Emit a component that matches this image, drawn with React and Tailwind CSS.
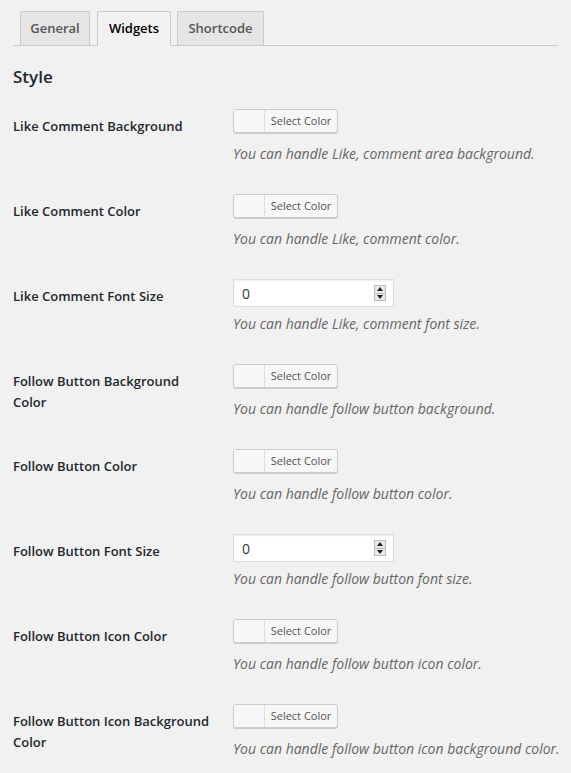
import React from 'react';

const rows = [
  { label: 'Like Comment Background', type: 'color', desc: 'You can handle Like, comment area background.' },
  { label: 'Like Comment Color', type: 'color', desc: 'You can handle Like, comment color.' },
  { label: 'Like Comment Font Size', type: 'number', desc: 'You can handle Like, comment font size.' },
  { label: 'Follow Button Background Color', type: 'color', desc: 'You can handle follow button background.' },
  { label: 'Follow Button Color', type: 'color', desc: 'You can handle follow button color.' },
  { label: 'Follow Button Font Size', type: 'number', desc: 'You can handle follow button font size.' },
  { label: 'Follow Button Icon Color', type: 'color', desc: 'You can handle follow button icon color.' },
  { label: 'Follow Button Icon Background Color', type: 'color', desc: 'You can handle follow button icon background color.' },
];

const ColorButton = () => (
  <button
    type="button"
    className="flex h-[24px] w-[105px] overflow-hidden rounded-[3px] border border-[#ccc] bg-[#f7f7f7] shadow-[0_1px_0_#ccc]"
  >
    <span className="h-full w-[31px] border-r border-[#ddd] bg-[#f7f7f7]" />
    <span className="flex-1 text-center text-[11px] leading-[22px] text-[#555]">Select Color</span>
  </button>
);

const NumberInput = () => (
  <div className="flex h-[28px] w-[161px] items-center justify-between border border-[#ddd] bg-white pl-[8px] pr-[7px] shadow-[inset_0_1px_2px_rgba(0,0,0,0.07)]">
    <span className="text-[14px] text-[#32373c]">0</span>
    <div className="flex h-[16px] w-[12px] flex-col border border-[#bbb] bg-[#e9e9e9]">
      <div className="flex flex-1 items-center justify-center border-b border-[#bbb]">
        <svg width="6" height="4" viewBox="0 0 6 4"><path d="M0 4 L3 0 L6 4 Z" fill="#222" /></svg>
      </div>
      <div className="flex flex-1 items-center justify-center">
        <svg width="6" height="4" viewBox="0 0 6 4"><path d="M0 0 L6 0 L3 4 Z" fill="#222" /></svg>
      </div>
    </div>
  </div>
);

const Tab = ({ children, active, className }) => (
  <div
    className={
      active
        ? `-mb-px h-[35px] border border-[#ccc] border-b-[#f1f1f1] bg-[#f1f1f1] text-center text-[13px] font-semibold leading-[33px] text-black ${className}`
        : `-mb-px h-[35px] border border-[#ccc] bg-[#e5e5e5] text-center text-[13px] font-semibold leading-[33px] text-[#555] ${className}`
    }
  >
    {children}
  </div>
);

export default function App() {
  return (
    <div className="min-h-screen bg-[#f1f1f1] px-[13px] pt-[11px] font-['Open_Sans','Noto_Sans',sans-serif] text-[#23282d]">
      <div className="flex items-end border-b border-[#ccc] pl-[7px]">
        <Tab className="w-[70px]">General</Tab>
        <Tab active className="ml-[7px] w-[74px]">Widgets</Tab>
        <Tab className="ml-[6px] w-[87px]">Shortcode</Tab>
      </div>

      <h2 className="mt-[19px] text-[17px] font-semibold leading-[24px]">Style</h2>

      <div className="mt-[7px]">
        {rows.map((row) => (
          <div key={row.label} className="flex h-[85px]">
            <div className="w-[220px] shrink-0 pr-[20px] pt-[20px] text-[13px] font-semibold leading-[21px]">
              {row.label}
            </div>
            <div className="pt-[13px]">
              <div className="h-[30px]">
                {row.type === 'color' ? <ColorButton /> : <NumberInput />}
              </div>
              <p className="mt-[5px] whitespace-nowrap text-[14px] italic leading-[20px] text-[#666]">{row.desc}</p>
            </div>
          </div>
        ))}
      </div>
    </div>
  );
}
